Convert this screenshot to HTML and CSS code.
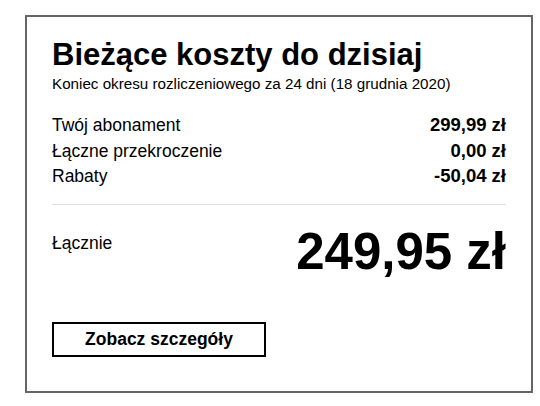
FILE: index.html
```html
<!DOCTYPE html>
<html lang="pl">
<head>
<meta charset="utf-8">
<link rel="stylesheet" href="styles.css">
</head>
<body>
<div class="card">
  <h1 class="title">Bieżące koszty do dzisiaj</h1>
  <p class="subtitle">Koniec okresu rozliczeniowego za 24 dni (18 grudnia 2020)</p>
  <div class="rows">
    <div class="row"><span>Twój abonament</span><span class="amount">299,99 zł</span></div>
    <div class="row"><span>Łączne przekroczenie</span><span class="amount">0,00 zł</span></div>
    <div class="row"><span>Rabaty</span><span class="amount">-50,04 zł</span></div>
  </div>
  <hr class="divider">
  <div class="total">
    <span class="total-label">Łącznie</span>
    <span class="total-amount">249,95 zł</span>
  </div>
  <button class="btn" type="button">Zobacz szczegóły</button>
</div>
</body>
</html>
```

FILE: styles.css
```css
* { box-sizing: border-box; }
html, body { margin: 0; padding: 0; background: #fff; }
body {
  font-family: "Liberation Sans", Arial, sans-serif;
  color: #000;
  padding: 15px 7px 0 25px;
}
.card {
  border: 2px solid #666;
  width: 508px;
  padding: 22px 25px 34px 25px;
  display: flex;
  flex-direction: column;
}
.title {
  margin: 0;
  font-size: 31px;
  line-height: 32px;
  font-weight: 700;
}
.subtitle {
  margin: 4px 0 0;
  font-size: 15.2px;
  line-height: 17px;
}
.rows {
  margin-top: 20px;
  display: flex;
  flex-direction: column;
}
.row {
  display: flex;
  justify-content: space-between;
  align-items: baseline;
  height: 25.5px;
  font-size: 17.5px;
  line-height: 25.5px;
}
.amount {
  font-weight: 700;
  font-size: 18.5px;
}
.divider {
  margin: 15.5px 0 0;
  border: 0;
  height: 1px;
  background: #ddd;
}
.total {
  margin-top: 21.5px;
  display: flex;
  justify-content: space-between;
  align-items: flex-start;
}
.total-label {
  margin-top: 4px;
  font-size: 17.5px;
  line-height: 25.5px;
}
.total-amount {
  font-size: 51px;
  line-height: 50px;
  font-weight: 700;
}
.btn {
  margin-top: 45.5px;
  align-self: flex-start;
  width: 214px;
  height: 35px;
  border: 2px solid #000;
  background: #fff;
  font-family: "Liberation Sans", Arial, sans-serif;
  font-size: 17.5px;
  font-weight: 700;
  color: #000;
  padding: 0;
  cursor: pointer;
}
```
